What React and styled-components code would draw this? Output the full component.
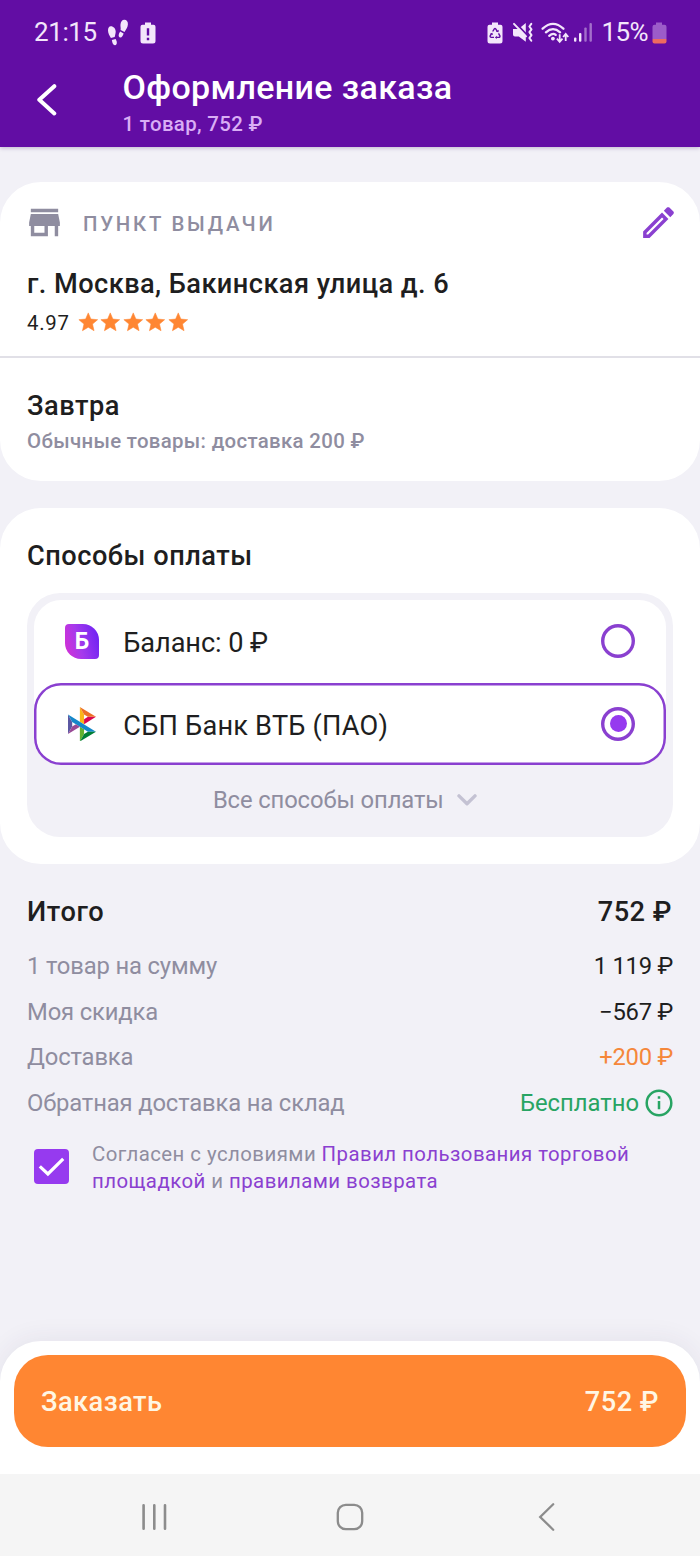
import React from "react";
import styled, { createGlobalStyle } from "styled-components";

const c = {
  header: "#620da4",
  page: "#f2f1f7",
  violet: "#8a40d0",
  accent: "#963aef",
  muted: "#8f8da0",
  text: "#1e1e20",
  orange: "#ff8632",
  green: "#28a463",
};

const GlobalStyle = createGlobalStyle`
  body { margin: 0; background: ${c.page}; font-family: Roboto, "Liberation Sans", sans-serif; color: ${c.text}; }
  *, *::before, *::after { box-sizing: border-box; }
  svg { display: block; flex: none; }
  button { font-family: inherit; border: 0; padding: 0; background: none; }
`;

const Screen = styled.div`
  width: 700px;
  height: 1556px;
  display: flex;
  flex-direction: column;
  overflow: hidden;
  background: ${c.page};
`;

const Header = styled.header`
  height: 147px;
  flex: none;
  background: ${c.header};
  color: #fff;
  box-shadow: 0 1px 4px rgba(60, 30, 100, 0.28);
`;

const StatusBar = styled.div`
  height: 65px;
  display: flex;
  align-items: center;
  justify-content: space-between;
  padding: 0 33px 0 34px;
  color: #f3e6fb;
`;

const StatusGroup = styled.div`
  display: flex;
  align-items: center;
  gap: ${(p) => p.$gap}px;
`;

const StatusText = styled.span`
  padding-bottom: 2px;
  font-size: 26px;
  line-height: 30px;
  letter-spacing: ${(p) => p.$spacing || 0}px;
`;

const TitleBar = styled.div`
  display: flex;
  padding: 2px 0 0 34px;
`;

const BackButton = styled.button`
  width: 88.5px;
  height: 64px;
  display: flex;
  align-items: center;
`;

const Title = styled.h1`
  margin: 0;
  font-size: 34px;
  line-height: 40px;
  font-weight: 500;
  letter-spacing: 0.36px;
`;

const Subtitle = styled.p`
  margin: 5px 0 0;
  font-size: 20.4px;
  line-height: 24px;
  font-weight: 500;
  letter-spacing: 0.35px;
  color: #d9aef5;
`;

const Card = styled.section`
  flex: none;
  height: ${(p) => p.$height}px;
  margin-top: ${(p) => p.$top}px;
  border-radius: 41px;
  background: #fff;
`;

const PickupBlock = styled.div`
  height: 176px;
  padding: 20px 21px 0 24px;
  border-bottom: 2px solid #e1e0e7;
`;

const PickupHeader = styled.div`
  display: flex;
  align-items: center;
  height: 41px;
`;

const PickupLabel = styled.span`
  flex: 1;
  margin-left: 18px;
  padding-top: 2px;
  font-size: 20.4px;
  line-height: 24px;
  font-weight: 500;
  letter-spacing: 2.75px;
  color: ${c.muted};
`;

const Heading = styled.h2`
  margin: 0;
  font-size: 27.2px;
  line-height: 32px;
  font-weight: 500;
  letter-spacing: ${(p) => p.$spacing ?? 0.5}px;
`;

const Address = styled(Heading)`
  margin: 25px 0 0 3px;
`;

const Rating = styled.div`
  display: flex;
  align-items: center;
  margin: 9px 0 0 3px;
  font-size: 20.4px;
  letter-spacing: 0.7px;
`;

const Score = styled.span`
  padding-top: 2px;
  line-height: 24px;
`;

const Stars = styled.div`
  display: flex;
  margin-left: 7px;
`;

const DeliveryBlock = styled.div`
  padding: 32px 27px 0;
`;

const DeliveryNote = styled.p`
  margin: 7px 0 0;
  font-size: 20.4px;
  line-height: 24px;
  font-weight: 500;
  letter-spacing: 0.33px;
  color: ${c.muted};
`;

const PaymentCard = styled(Card)`
  padding: 32px 27px 0;
`;

const PaymentBox = styled.div`
  height: 243.5px;
  margin-top: 21px;
  padding: 7px;
  border-radius: 33px;
  background: ${c.page};
`;

const PaymentList = styled.div`
  border-radius: 27px;
  background: #fff;
`;

const PaymentOption = styled.label`
  display: flex;
  align-items: center;
  height: 82.5px;
  padding: 0 31px 0 28px;
  border-radius: 27px;
  box-shadow: ${(p) => (p.$selected ? `inset 0 0 0 2.5px ${c.violet}` : "none")};
`;

const PaymentIcon = styled.span`
  display: flex;
  width: 41px;
  padding-left: ${(p) => p.$indent}px;
`;

const BalanceBadge = styled.span`
  width: 34px;
  height: 35px;
  display: flex;
  align-items: center;
  justify-content: center;
  border-radius: 4px 16px 4px 16px;
  background: linear-gradient(75deg, #d92fd2 0%, #a63aec 42%, #6820f4 100%);
  color: #fff;
  font-size: 23px;
  line-height: 35px;
  font-weight: 700;
`;

const PaymentName = styled.span`
  flex: 1;
  margin-left: 20.3px;
  padding-top: 4px;
  font-size: 27.2px;
  line-height: 32px;
  letter-spacing: ${(p) => p.$spacing}px;
`;

const Radio = styled.span`
  width: 34px;
  height: 34px;
  display: flex;
  align-items: center;
  justify-content: center;
  border-radius: 50%;
  box-shadow: inset 0 0 0 3.4px ${c.violet};

  &::after {
    content: "";
    width: 17px;
    height: 17px;
    border-radius: 50%;
    background: ${(p) => (p.$checked ? c.accent : "transparent")};
  }
`;

const AllMethods = styled.button`
  width: 100%;
  height: 71px;
  display: flex;
  align-items: center;
  justify-content: center;
  gap: 13.5px;
  padding: 0 10px 1px 0;
  font-size: 23.8px;
  line-height: 28px;
  letter-spacing: -0.12px;
  color: ${c.muted};
`;

const Summary = styled.section`
  flex: 1;
  padding: 32px 27px 0;
`;

const TotalRow = styled.div`
  display: flex;
  justify-content: space-between;
  height: 47.500px;
  padding-right: 1px;
`;

const Row = styled.div`
  display: flex;
  align-items: center;
  justify-content: space-between;
  height: 45.5px;
  font-size: 23.8px;
  line-height: 28px;
`;

const RowLabel = styled.span`
  letter-spacing: -0.15px;
  color: ${c.muted};
`;

const RowValue = styled.span`
  display: flex;
  align-items: center;
  gap: 6px;
  letter-spacing: ${(p) => (p.$tight ? -0.25 : 0)}px;
  color: ${(p) => p.$color || c.text};
`;

const Consent = styled.label`
  display: flex;
  margin-top: 15px;
  padding-left: 7px;
`;

const Checkbox = styled.span`
  width: 35px;
  height: 35px;
  margin: 8px 23px 0 0;
  flex: none;
  border-radius: 4px;
  background: ${c.accent};
`;

const ConsentText = styled.span`
  font-size: 20.4px;
  line-height: 27.3px;
  letter-spacing: 0.45px;
  color: ${c.muted};
  white-space: nowrap;
`;

const Link = styled.a`
  color: ${c.violet};
`;

const OrderBar = styled.div`
  height: 133px;
  flex: none;
  padding: 14px 14px 0;
  border-radius: 41px 41px 0 0;
  background: #fff;
  box-shadow: 0 -2px 26px rgba(50, 40, 90, 0.07);
`;

const OrderButton = styled.button`
  width: 100%;
  height: 92px;
  display: flex;
  align-items: center;
  justify-content: space-between;
  padding: 1px 27px 0;
  border-radius: 34px;
  background: ${c.orange};
  color: #fff6e4;
  font-size: 27.2px;
  line-height: 32px;
  font-weight: 500;
  letter-spacing: 0.48px;
`;

const NavBar = styled.nav`
  position: relative;
  height: 82px;
  flex: none;
  display: flex;
  align-items: center;
  justify-content: space-between;
  padding: 4px 139px 0 139px;
  background: #f5f5f5;
`;

const Footprints = () => (
  <svg width="22" height="28" viewBox="0 0 22 28" fill="currentColor">
    <path d="M3.8 7.3C6.500 7.300 8.600 9.700 8.700 12.600C8.700 14.300 8.200 16 7.700 18.100L3.900 19.100C2.600 16.700 1 14.300 1 11.500C1 9 2 7.300 3.800 7.300Z" />
    <path d="M4.900 21.100L8.700 20L9.700 22.500C10.200 24.500 9.500 26.200 7.900 26.200C6 26.200 5.100 23.600 4.900 21.100Z" />
    <path d="M17.300 0.800C19.900 .8 21.100 2.900 20.900 5.500C20.700 8.200 19.200 10.300 17.500 13L13.600 11C14 8.900 13.200 7.500 13.500 5.200C13.800 2.700 15.300 .8 17.300 .8Z" />
    <path d="M13.200 12.600L16.600 14.400C15.900 16.800 14.600 18.900 12.900 18.400C11 17.800 11.500 14.900 13.200 12.600Z" />
  </svg>
);

const BatteryAlert = () => (
  <svg width="16" height="22" viewBox="0 0 16 22">
    <path fill="currentColor" d="M5 .5h6v2.200h2.500a2 2 0 0 1 2 2V19a2.500 2.500 0 0 1-2.500 2.500H3A2.500 2.500 0 0 1 .5 19V4.700a2 2 0 0 1 2-2H5Z" />
    <path stroke={c.header} strokeWidth="2.400" d="M8 6.300v7.200M8 15.800v2.400" />
  </svg>
);

const BatteryRecycle = () => (
  <svg width="16" height="22" viewBox="0 0 16 22">
    <path fill="currentColor" d="M5 .5h6v2.200h2.500a2 2 0 0 1 2 2V19a2.500 2.500 0 0 1-2.500 2.500H3A2.500 2.500 0 0 1 .5 19V4.700a2 2 0 0 1 2-2H5Z" />
    <g fill="none" stroke={c.header} strokeWidth="1.400">
      <path d="M5.700 9.500L7.300 6.900Q8 6 8.700 6.900L10.400 9.500" />
      <path d="M11.500 11.400L12.900 13.800Q13.300 15.400 11.600 15.400H9.200" />
      <path d="M7 15.400H4.400Q2.700 15.300 3.200 13.800L4.600 11.400" />
    </g>
    <path fill={c.header} d="M8.900 9.700l2.600 .6.300-2.600ZM9.800 13.700v3.400l-1.900-1.700ZM3 12l2.300-1.300.8 2.400Z" />
  </svg>
);

const MuteVibrate = () => (
  <svg width="21" height="21" viewBox="0 0 21 21">
    <path fill="currentColor" d="M1 7h5.500L13.800 1v18.800L6.800 14.400H3Q1 14.400 1 12.400Z" />
    <path stroke={c.header} strokeWidth="2" d="M3.300 .8L16.500 14.600" />
    <path stroke="currentColor" strokeWidth="2" strokeLinecap="round" d="M2 1.900L14 14.400" />
    <path fill="none" stroke="currentColor" strokeWidth="2" strokeLinecap="round" strokeLinejoin="round" d="M19.300 1.800L17.400 4.500L19.500 7.300L17.400 10.200L19.500 13.100L17.400 16L19.300 18.800" />
  </svg>
);

const Wifi = () => (
  <svg width="28" height="22" viewBox="0 0 28 22" fill="none" stroke="currentColor">
    <g strokeWidth="2.300" strokeLinecap="round">
      <path d="M1.600 6.700Q12-3 22.400 6.700" />
      <path d="M4.900 10.300Q12 4 19.100 10.300" />
      <path d="M8.200 13.800Q12 10.600 14.700 12.900" />
    </g>
    <circle cx="11.900" cy="16.600" r="1.900" fill="currentColor" stroke="none" />
    <g strokeWidth="1.800">
      <path d="M18.700 12.300V19.200M15.900 16.700L18.700 19.800L21.500 16.700" />
      <path d="M24.700 19V12.500M22.100 15L24.700 11.900L27.300 15" />
    </g>
  </svg>
);

const Signal = () => (
  <svg width="20" height="21" viewBox="0 0 20 21" fill="currentColor">
    <rect x="1" y="15.500" width="2.400" height="4.300" rx="1" />
    <rect x="6" y="11" width="2.400" height="8.800" rx="1" />
    <rect x="11.300" y="5.500" width="2.400" height="14.300" rx="1" opacity=".45" />
    <rect x="16.500" y="1" width="2.400" height="18.800" rx="1" opacity=".45" />
  </svg>
);

const BatteryLow = () => (
  <svg width="15" height="22" viewBox="0 0 15 22">
    <path fill="#9c5cc9" d="M4 .5h6v2.200h2.500a2 2 0 0 1 2 2V17H.5V4.700a2 2 0 0 1 2-2H4Z" />
    <path fill="#ee6b5f" d="M.5 17h14v2.500a2 2 0 0 1-2 2h-10a2 2 0 0 1-2-2Z" />
  </svg>
);

const BackArrow = () => (
  <svg width="26" height="34" viewBox="0 0 26 34" fill="none" stroke="#fff" strokeWidth="4" strokeLinecap="round" strokeLinejoin="round">
    <path d="M20.300 4.200L5.300 17.800L20.300 31.400" />
  </svg>
);

const Store = () => (
  <svg width="41" height="41" viewBox="0 0 24 24" fill={c.muted}>
    <path d="M20 4H4v2h16V4zm1 10v-2l-1-5H4l-1 5v2h1v6h10v-6h4v6h2v-6h1zm-9 4H6v-4h6v4z" />
  </svg>
);

const Pencil = () => (
  <svg width="41" height="41" viewBox="0 0 24 24" fill={c.violet}>
    <path d="M14.060 9.020l.92.92L5.920 19H5v-.92l9.060-9.060M17.660 3c-.25 0-.51.1-.7.29l-1.830 1.830 3.750 3.750 1.830-1.830c.39-.39.39-1.020 0-1.410l-2.340-2.340c-.2-.2-.45-.29-.71-.29zm-3.600 3.190L3 17.250V21h3.750L17.810 9.940l-3.750-3.750z" />
  </svg>
);

const Star = () => (
  <svg width="22.500" height="22.500" viewBox="0 0 24 24" fill={c.orange} stroke={c.orange} strokeWidth="0.600" strokeLinejoin="round">
    <path d="M12 17.270L18.180 21l-1.640-7.030L22 9.240l-7.190-.61L12 2 9.190 8.630 2 9.240l5.460 4.730L5.820 21z" />
  </svg>
);

const FastPayments = () => (
  <svg width="28" height="34.500" viewBox="0 0 97.300 120">
    <path fill="#5b57a2" d="M0 26.120L14.532 52.098V67.943L.017 93.863Z" />
    <path fill="#d90751" d="M55.797 42.644L69.417 34.296L97.292 34.270L55.797 59.688Z" />
    <path fill="#fab718" d="M55.720 25.882L55.797 60.346L41.231 51.396V0Z" />
    <path fill="#ed6f26" d="M97.293 34.269L69.418 34.295L55.720 25.882L41.231 0Z" />
    <path fill="#63b22f" d="M55.797 94.035V77.326L41.231 68.546L41.239 119.959Z" />
    <path fill="#1487c9" d="M69.388 85.742L14.532 52.098L0 26.120L97.235 85.708Z" />
    <path fill="#017f36" d="M41.239 119.959L55.795 94.035L69.388 85.742L97.234 85.708Z" />
    <path fill="#984995" d="M.017 93.863L41.355 68.546L27.457 60.018L14.532 67.943Z" />
  </svg>
);

const ChevronDown = () => (
  <svg width="20" height="12" viewBox="0 0 20 12" fill="none" stroke="#c4c2d3" strokeWidth="3.400" strokeLinecap="round" strokeLinejoin="round">
    <path d="M2 1.900L10 9.800L18 1.900" />
  </svg>
);

const Info = () => (
  <svg width="28" height="28" viewBox="0 0 28 28" fill="none" stroke={c.green} strokeWidth="2.500">
    <circle cx="14" cy="14" r="12.300" />
    <path d="M14 12V20.200M14 7.300V9.800" />
  </svg>
);

const Check = () => (
  <svg width="35" height="35" viewBox="0 0 35 35" fill="none" stroke="#fff" strokeWidth="3.200">
    <path d="M5.800 17.300L13.900 25L29.200 9.800" />
  </svg>
);

const Recents = () => (
  <svg width="30" height="30" viewBox="0 0 30 30" stroke="#8c8c8c" strokeWidth="2.600" strokeLinecap="round">
    <path d="M4.600 3.200V26.800M15.300 3.200V26.800M26 3.200V26.800" />
  </svg>
);

const Home = () => (
  <svg width="30" height="30" viewBox="0 0 30 30" fill="none" stroke="#8c8c8c" strokeWidth="2.300">
    <rect x="2.800" y="2.800" width="24.400" height="24.400" rx="8" />
  </svg>
);

const NavBack = () => (
  <svg width="30" height="30" viewBox="0 0 30 30" fill="none" stroke="#8c8c8c" strokeWidth="2.300" strokeLinecap="round">
    <path d="M22.200 2.300L9.200 15L22.200 27.700" />
  </svg>
);

const charges = [
  { label: "1 товар на сумму", value: "1 119 ₽" },
  { label: "Моя скидка", value: "−567 ₽" },
  { label: "Доставка", value: "+200 ₽", color: "#f5873a" },
  { label: "Обратная доставка на склад", value: "Бесплатно", color: c.green, info: true },
];

export default function App() {
  return (
    <>
      <GlobalStyle />
      <Screen>
        <Header>
          <StatusBar>
            <StatusGroup $gap={10.5}>
              <StatusText $spacing={-0.4}>21:15</StatusText>
              <Footprints />
              <BatteryAlert />
            </StatusGroup>
            <StatusGroup $gap={8.5}>
              <BatteryRecycle />
              <MuteVibrate />
              <StatusGroup $gap={4}>
                <Wifi />
                <Signal />
              </StatusGroup>
              <StatusGroup $gap={4}>
                <StatusText $spacing={-0.6}>15%</StatusText>
                <BatteryLow />
              </StatusGroup>
            </StatusGroup>
          </StatusBar>
          <TitleBar>
            <BackButton aria-label="Назад">
              <BackArrow />
            </BackButton>
            <div>
              <Title>Оформление заказа</Title>
              <Subtitle>1 товар, 752 ₽</Subtitle>
            </div>
          </TitleBar>
        </Header>

        <Card $top={35} $height={299}>
          <PickupBlock>
            <PickupHeader>
              <Store />
              <PickupLabel>ПУНКТ ВЫДАЧИ</PickupLabel>
              <Pencil />
            </PickupHeader>
            <Address $spacing={0.43}>г. Москва, Бакинская улица д. 6</Address>
            <Rating>
              <Score>4.97</Score>
              <Stars>
                {[1, 2, 3, 4, 5].map((n) => (
                  <Star key={n} />
                ))}
              </Stars>
            </Rating>
          </PickupBlock>
          <DeliveryBlock>
            <Heading>Завтра</Heading>
            <DeliveryNote>Обычные товары: доставка 200 ₽</DeliveryNote>
          </DeliveryBlock>
        </Card>

        <PaymentCard $top={27} $height={356}>
          <Heading>Способы оплаты</Heading>
          <PaymentBox>
            <PaymentList>
              <PaymentOption>
                <PaymentIcon $indent={3}>
                  <BalanceBadge>Б</BalanceBadge>
                </PaymentIcon>
                <PaymentName $spacing={-0.1}>Баланс: 0 ₽</PaymentName>
                <Radio />
              </PaymentOption>
              <PaymentOption $selected>
                <PaymentIcon $indent={5.5}>
                  <FastPayments />
                </PaymentIcon>
                <PaymentName $spacing={0.2}>СБП Банк ВТБ (ПАО)</PaymentName>
                <Radio $checked />
              </PaymentOption>
            </PaymentList>
            <AllMethods>
              Все способы оплаты
              <ChevronDown />
            </AllMethods>
          </PaymentBox>
        </PaymentCard>

        <Summary>
          <TotalRow>
            <Heading $spacing={0.6}>Итого</Heading>
            <Heading>752 ₽</Heading>
          </TotalRow>
          {charges.map(({ label, value, color, info }) => (
            <Row key={label}>
              <RowLabel>{label}</RowLabel>
              <RowValue $color={color} $tight={!info}>
                {value}
                {info && <Info />}
              </RowValue>
            </Row>
          ))}
          <Consent>
            <Checkbox>
              <Check />
            </Checkbox>
            <ConsentText>
              Согласен с условиями <Link>Правил пользования торговой</Link>
              <br />
              <Link>площадкой</Link> и <Link>правилами возврата</Link>
            </ConsentText>
          </Consent>
        </Summary>

        <OrderBar>
          <OrderButton>
            <span>Заказать</span>
            <span>752 ₽</span>
          </OrderButton>
        </OrderBar>
        <NavBar>
          <Recents />
          <Home />
          <NavBack />
        </NavBar>
      </Screen>
    </>
  );
}
